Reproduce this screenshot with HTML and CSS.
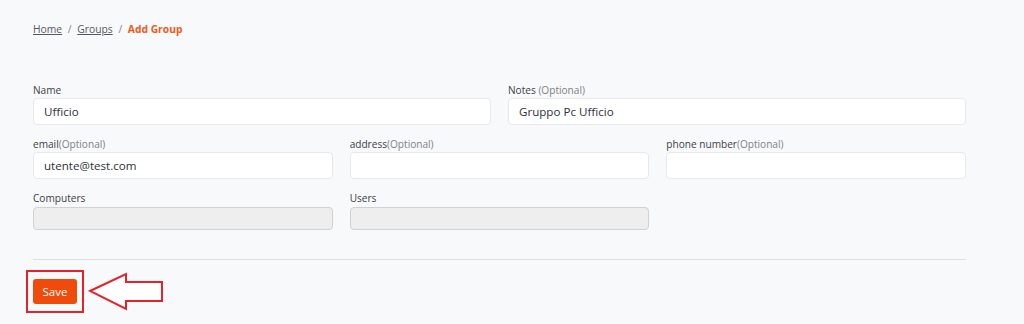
FILE: index.html
```html
<!DOCTYPE html>
<html lang="en">
<head>
    <meta charset="UTF-8">
    <title>Add Group</title>
    <link rel="stylesheet" href="styles.css">
</head>
<body>
    <div class="page">
        <!-- Breadcrumb -->
        <nav class="breadcrumb">
            <a href="#">Home</a>
            <span class="sep">/</span>
            <a href="#">Groups</a>
            <span class="sep">/</span>
            <span class="current">Add Group</span>
        </nav>

        <!-- Group form -->
        <form class="group-form">
            <div class="row two">
                <div class="form-group">
                    <label>Name</label>
                    <input type="text" value="Ufficio">
                </div>
                <div class="form-group">
                    <label>Notes <span class="opt">(Optional)</span></label>
                    <input type="text" value="Gruppo Pc Ufficio">
                </div>
            </div>
            <div class="row three">
                <div class="form-group">
                    <label>email<span class="opt">(Optional)</span></label>
                    <input type="text" value="utente@test.com">
                </div>
                <div class="form-group">
                    <label>address<span class="opt">(Optional)</span></label>
                    <input type="text">
                </div>
                <div class="form-group">
                    <label>phone number<span class="opt">(Optional)</span></label>
                    <input type="text">
                </div>
            </div>
            <div class="row three">
                <div class="form-group">
                    <label>Computers</label>
                    <input type="text" class="disabled" disabled>
                </div>
                <div class="form-group">
                    <label>Users</label>
                    <input type="text" class="disabled" disabled>
                </div>
            </div>

            <hr class="divider">

            <div class="actions">
                <span class="highlight">
                    <button type="button" class="btn">Save</button>
                </span>
                <svg class="arrow" width="78" height="40" viewBox="0 0 78 40">
                    <path d="M2 20 L38 3 L38 11 L74 11 L74 30 L38 30 L38 38 Z" fill="#fff" stroke="#e8202a" stroke-width="2" stroke-linejoin="miter"/>
                </svg>
            </div>
        </form>
    </div>
</body>
</html>
```

FILE: styles.css
```css
/* Reset */
* {
    box-sizing: border-box;
    margin: 0;
    padding: 0;
}

body {
    font-family: 'Open Sans', 'Noto Sans', sans-serif;
    background-color: #f8f9fa;
    color: #3a3d42;
}

.page {
    width: 966px;
    padding: 21px 0 0 33px;
}

/* Breadcrumb */
.breadcrumb {
    font-size: 10.3px;
    line-height: 16px;
    color: #6c7077;
}

.breadcrumb a {
    color: #55595f;
    text-decoration: underline;
}

.breadcrumb .sep {
    margin: 0 3px;
    color: #80848a;
}

.breadcrumb .current {
    color: #f05a1a;
    font-weight: 700;
}

/* Form */
.group-form {
    margin-top: 46px;
}

.row {
    display: grid;
    column-gap: 17px;
    margin-bottom: 12px;
}

.row.two {
    grid-template-columns: 1fr 1fr;
}

.row.three {
    grid-template-columns: 1fr 1fr 1fr;
}

.form-group label {
    display: block;
    font-size: 10.1px;
    line-height: 14px;
    color: #3d4046;
    margin-bottom: 1px;
}

.form-group .opt {
    color: #7d8188;
}

.form-group input {
    width: 100%;
    height: 27px;
    padding: 0 10px;
    font-family: inherit;
    font-size: 11.6px;
    color: #2f3237;
    background: #fff;
    border: 1px solid #e6e8eb;
    border-radius: 4px;
}

.form-group input.disabled {
    height: 23px;
    background: #eeeeee;
    border-color: #cfd1d4;
}

.divider {
    border: none;
    border-top: 1px solid #dcdee1;
    margin-top: 29px;
}

/* Save action with annotation */
.actions {
    position: relative;
    margin-top: 10px;
    height: 44px;
}

.highlight {
    display: inline-block;
    margin-left: -7px;
    padding: 7px 5px 7px 5px;
    border: 2px solid #e8202a;
}

.btn {
    display: block;
    width: 44px;
    height: 25px;
    font-family: inherit;
    font-size: 11.5px;
    color: #fff;
    background-color: #ef4c0c;
    border: none;
    border-radius: 3px;
}

.arrow {
    position: absolute;
    left: 55px;
    top: 1px;
}
```
